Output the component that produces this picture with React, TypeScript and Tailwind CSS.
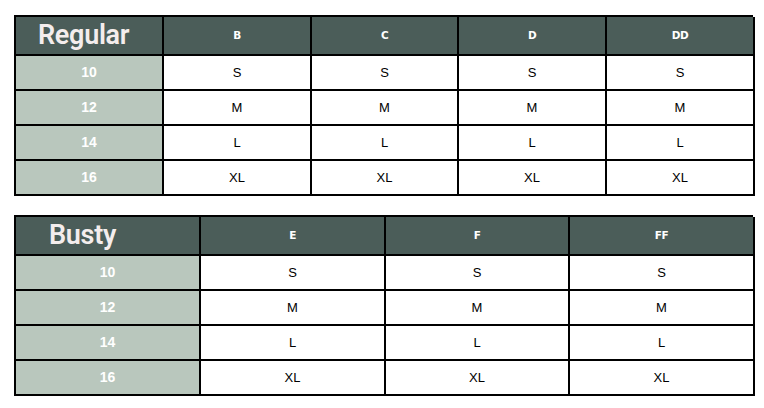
const regular = {
  title: 'Regular',
  cups: ['B', 'C', 'D', 'DD'],
  cols: 'grid-cols-[148px_148px_147px_148px_148px]',
  titlePad: 'pl-[22px]',
};

const busty = {
  title: 'Busty',
  cups: ['E', 'F', 'FF'],
  cols: 'grid-cols-[185px_185px_184px_185px]',
  titlePad: 'pl-[33px]',
};

const rows = [
  { band: '10', size: 'S' },
  { band: '12', size: 'M' },
  { band: '14', size: 'L' },
  { band: '16', size: 'XL' },
];

function SizeTable({ table }: { table: typeof regular }) {
  return (
    <div className={`grid ${table.cols} w-[739px] border-l-2 border-t-2 border-black`}>
      <div className={`flex h-[39px] items-center border-b-2 border-r-2 border-black bg-[#4b5d59] ${table.titlePad}`}>
        <span className="text-[27px] font-semibold leading-none tracking-[-0.3px] text-[#f4eded] [font-family:Roboto,sans-serif]">
          {table.title}
        </span>
      </div>
      {table.cups.map((cup) => (
        <div
          key={cup}
          className="flex h-[39px] items-center justify-center border-b-2 border-r-2 border-black bg-[#4b5d59] text-[10.5px] font-bold tracking-[-0.5px] text-white [font-family:'DejaVu_Sans',sans-serif]"
        >
          {cup}
        </div>
      ))}
      {rows.map((row) => (
        <div key={row.band} className="contents">
          <div className="flex h-[35px] items-center justify-center border-b-2 border-r-2 border-black bg-[#b9c7bd] text-[14px] font-bold text-white [font-family:'Liberation_Sans',Arial,sans-serif]">
            {row.band}
          </div>
          {table.cups.map((cup) => (
            <div
              key={cup}
              className="flex h-[35px] items-center justify-center border-b-2 border-r-2 border-black bg-white text-[13px] text-black [font-family:'Liberation_Sans',Arial,sans-serif]"
            >
              {row.size}
            </div>
          ))}
        </div>
      ))}
    </div>
  );
}

export default function App() {
  return (
    <div className="flex h-[408px] w-[764px] flex-col gap-[19px] bg-white pl-[14px] pt-[15px]">
      <SizeTable table={regular} />
      <SizeTable table={busty} />
    </div>
  );
}
